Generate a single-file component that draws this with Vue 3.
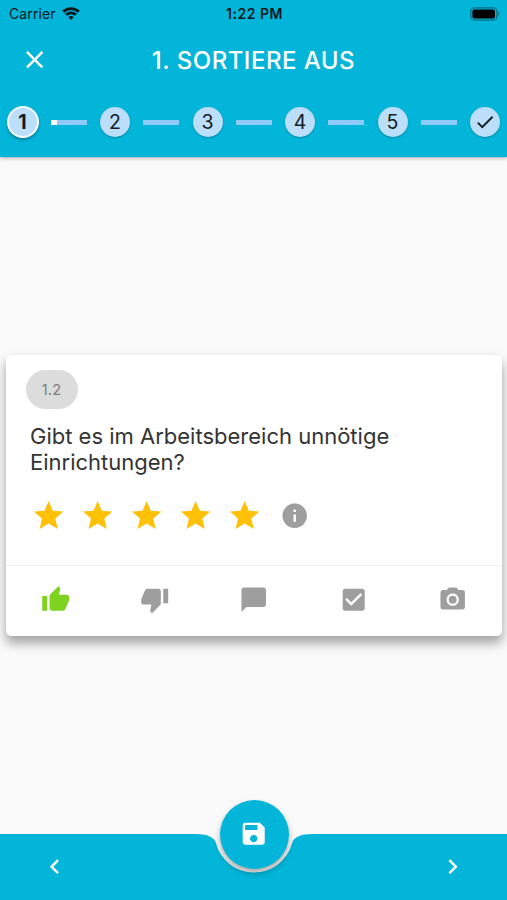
<template>
  <div class="page">
    <header class="app-header">
      <div class="status-bar">
        <div class="status-left">
          <span class="carrier">Carrier</span>
          <svg class="wifi" viewBox="0 0 18 13">
            <path d="M9 13L6.3 10.2a3.9 3.9 0 0 1 5.4 0z" />
            <path class="wave" d="M4.1 7.8a7 7 0 0 1 9.8 0M1.2 4.8a11.1 11.1 0 0 1 15.6 0" />
          </svg>
        </div>
        <span class="time">1:22 PM</span>
        <div class="status-right">
          <svg class="battery" viewBox="0 0 30 14">
            <rect class="shell" x="0.8" y="0.8" width="26" height="12.4" rx="3.6" />
            <rect x="2.4" y="2.6" width="22.6" height="8.8" rx="2" />
            <path class="cap" d="M28 4.8c1.8.7 1.8 3.7 0 4.4z" />
          </svg>
        </div>
      </div>

      <div class="title-bar">
        <button type="button" class="icon-btn">
          <svg class="icon" viewBox="0 0 24 24"><path :d="icons.close" /></svg>
        </button>
        <h1 class="title">1. SORTIERE AUS</h1>
      </div>

      <div class="stepper">
        <template v-for="step in steps" :key="step">
          <div class="step" :class="{ active: step === current }">{{ step }}</div>
          <div class="track">
            <div v-if="step === current" class="track-fill" :style="{ width: progress + '%' }"></div>
          </div>
        </template>
        <div class="step">
          <svg class="step-check" viewBox="0 0 24 24"><path :d="icons.check" /></svg>
        </div>
      </div>
    </header>

    <main class="content">
      <section class="card">
        <div class="card-body">
          <span class="chip">1.2</span>
          <p class="question">Gibt es im Arbeitsbereich unnötige Einrichtungen?</p>
          <div class="rating">
            <button v-for="n in 5" :key="n" type="button" class="star" @click="rating = n">
              <svg :class="{ filled: n <= rating }" viewBox="0 0 24 24"><path :d="icons.star" /></svg>
            </button>
            <svg class="icon info" viewBox="0 0 24 24"><path :d="icons.info" /></svg>
          </div>
        </div>
        <div class="card-actions">
          <button
            v-for="a in actions"
            :key="a"
            type="button"
            class="action"
            :class="{ selected: a === selected }"
            @click="selected = a"
          >
            <svg class="icon" viewBox="0 0 24 24"><path :d="icons[a]" /></svg>
          </button>
        </div>
      </section>
    </main>

    <footer class="bottom-bar">
      <!-- bar background with the notch for the save button -->
      <svg class="bar-shape" viewBox="0 0 507 67">
        <path d="M0 .9H195.3Q213.7.9 216.1 10.4A39.2 39.2 0 0 0 291.9 10.4Q294.3.9 312.7.9H507V67H0z" />
      </svg>
      <button type="button" class="nav-btn">
        <svg class="icon" viewBox="0 0 24 24"><path :d="icons.left" /></svg>
      </button>
      <button type="button" class="nav-btn">
        <svg class="icon" viewBox="0 0 24 24"><path :d="icons.right" /></svg>
      </button>
      <button type="button" class="fab">
        <svg class="icon" viewBox="0 0 24 24"><path :d="icons.save" /></svg>
      </button>
    </footer>
  </div>
</template>

<script setup>
import { ref } from 'vue'

const steps = [1, 2, 3, 4, 5]
const current = ref(1)
const progress = ref(18)
const rating = ref(5)

const actions = ['thumbUp', 'thumbDown', 'comment', 'checkbox', 'camera']
const selected = ref('thumbUp')

const icons = {
  close: 'M19 6.41L17.59 5 12 10.59 6.41 5 5 6.41 10.59 12 5 17.59 6.41 19 12 13.41 17.59 19 19 17.59 13.41 12z',
  check: 'M9 16.17L4.83 12l-1.42 1.41L9 19 21 7l-1.41-1.41z',
  star: 'M12 17.27L18.18 21l-1.64-7.03L22 9.24l-7.19-.61L12 2 9.19 8.63 2 9.24l5.46 4.73L5.82 21z',
  info: 'M12 2C6.48 2 2 6.48 2 12s4.48 10 10 10 10-4.48 10-10S17.52 2 12 2zm1 15h-2v-6h2v6zm0-8h-2V7h2v2z',
  thumbUp: 'M1 21h4V9H1v12zm22-11c0-1.1-.9-2-2-2h-6.31l.95-4.57.03-.32c0-.41-.17-.79-.44-1.06L14.17 1 7.59 7.59C7.22 7.95 7 8.45 7 9v10c0 1.1.9 2 2 2h9c.83 0 1.54-.5 1.84-1.22l3.02-7.05c.09-.23.14-.47.14-.73v-2z',
  thumbDown: 'M15 3H6c-.83 0-1.54.5-1.84 1.22l-3.02 7.05c-.09.23-.14.47-.14.73v2c0 1.1.9 2 2 2h6.31l-.95 4.57-.03.32c0 .41.17.79.44 1.06L9.83 23l6.59-6.59c.36-.36.58-.86.58-1.41V5c0-1.1-.9-2-2-2zm4 0v12h4V3h-4z',
  comment: 'M20 2H4c-1.1 0-2 .9-2 2v18l4-4h14c1.1 0 2-.9 2-2V4c0-1.1-.9-2-2-2z',
  checkbox: 'M19 3H5c-1.11 0-2 .9-2 2v14c0 1.1.89 2 2 2h14c1.11 0 2-.9 2-2V5c0-1.1-.89-2-2-2zm-9 14l-5-5 1.41-1.41L10 14.17l7.59-7.59L19 8l-9 9z',
  camera: 'M12 8.8a3.2 3.2 0 1 0 0 6.4 3.2 3.2 0 0 0 0-6.4zM9 2L7.17 4H4c-1.1 0-2 .9-2 2v12c0 1.1.9 2 2 2h16c1.1 0 2-.9 2-2V6c0-1.1-.9-2-2-2h-3.17L15 2H9zm3 15c-2.76 0-5-2.24-5-5s2.24-5 5-5 5 2.24 5 5-2.24 5-5 5z',
  left: 'M15.41 7.41L14 6l-6 6 6 6 1.41-1.41L10.83 12z',
  right: 'M10 6L8.59 7.41 13.17 12l-4.58 4.59L10 18l6-6z',
  save: 'M17 3H5c-1.11 0-2 .9-2 2v14c0 1.1.89 2 2 2h14c1.1 0 2-.9 2-2V7l-4-4zm-5 16c-1.66 0-3-1.34-3-3s1.34-3 3-3 3 1.34 3 3-1.34 3-3 3zm3-10H5V5h10v4z',
}
</script>

<style>
body {
  margin: 0;
}
</style>

<style scoped>
.page {
  display: flex;
  flex-direction: column;
  height: 100vh;
  background: #fafafa;
  font-family: Inter, Roboto, sans-serif;
  overflow: hidden;
}

button {
  padding: 0;
  border: none;
  background: none;
  cursor: pointer;
}

svg {
  display: block;
  fill: currentColor;
}

.icon {
  width: 29.4px;
  height: 29.4px;
}

.app-header {
  height: 157px;
  flex-shrink: 0;
  background: #03b5d9;
  box-shadow: 0 1px 4px rgba(0, 0, 0, 0.35);
}

.status-bar {
  display: grid;
  grid-template-columns: 1fr auto 1fr;
  align-items: center;
  height: 27px;
  padding: 0 7px 0 9px;
  color: #06181d;
  font-size: 14px;
}

.status-left {
  display: flex;
  align-items: center;
  gap: 6px;
}

.carrier {
  letter-spacing: 0.1px;
}

.wifi {
  width: 18px;
  height: 13px;
}

.wave {
  fill: none;
  stroke: currentColor;
  stroke-width: 2.8;
}

.time {
  font-weight: 600;
  letter-spacing: 0.5px;
}

.status-right {
  display: flex;
  justify-content: flex-end;
}

.battery {
  width: 30px;
  height: 14px;
  color: #000;
}

.shell {
  fill: none;
  stroke: #000;
  stroke-width: 1.2;
  opacity: 0.4;
}

.cap {
  opacity: 0.4;
}

.title-bar {
  display: grid;
  grid-template-columns: 70px 1fr 70px;
  align-items: center;
  height: 66px;
  color: #fff;
}

.icon-btn {
  display: flex;
  justify-content: center;
  color: #fff;
}

.title {
  margin: 0;
  text-align: center;
  font-size: 24px;
  font-weight: 500;
  letter-spacing: 0.5px;
}

.stepper {
  display: flex;
  align-items: center;
  justify-content: space-between;
  height: 58px;
  padding: 0 7px 0 7.5px;
}

.step {
  display: flex;
  align-items: center;
  justify-content: center;
  width: 30px;
  height: 30px;
  border-radius: 50%;
  background: #bbdefb;
  box-shadow: 0 1px 2px rgba(0, 0, 0, 0.25);
  color: #15191c;
  font-size: 19.5px;
}

.step.active {
  box-shadow: inset 0 0 0 1px #fff, 0 0 0 1px #fff, 0 2px 3px 1px rgba(0, 0, 0, 0.3);
  font-weight: 700;
}

.step-check {
  width: 22px;
  height: 22px;
}

.track {
  width: 36px;
  height: 5px;
  background: #90caf9;
}

.track-fill {
  height: 100%;
  background: #fff;
}

.content {
  flex: 1;
  padding: 198px 5px 0 6px;
}

.card {
  height: 281px;
  border-radius: 5px;
  background: #fff;
  box-shadow: 0 8px 11px rgba(0, 0, 0, 0.25), 0 4px 12px rgba(0, 0, 0, 0.14);
}

.card-body {
  box-sizing: border-box;
  height: 211px;
  padding: 15px 24px 0;
  border-bottom: 1px solid #f0f0f0;
}

.chip {
  display: flex;
  align-items: center;
  justify-content: center;
  width: 52px;
  height: 39px;
  margin-left: -4.5px;
  border-radius: 19.5px;
  background: #dcdcdc;
  color: #7d7d7d;
  font-size: 14.5px;
  letter-spacing: 0.2px;
}

.question {
  margin: 14px 0 0;
  color: #333;
  font-size: 22px;
  line-height: 26px;
}

.rating {
  display: flex;
  align-items: center;
  height: 36px;
  margin-top: 22.5px;
}

.star {
  display: flex;
  justify-content: center;
  width: 49px;
  color: #bdbdbd;
}

.star:first-child {
  margin-left: -6px;
}

.star svg {
  width: 35.3px;
  height: 35.3px;
}

.star .filled {
  color: #ffc107;
}

.info {
  margin-left: 10.5px;
  margin-top: 1px;
  color: #9e9e9e;
}

.card-actions {
  display: grid;
  grid-template-columns: repeat(5, 1fr);
  height: 70px;
}

.action {
  display: flex;
  align-items: center;
  justify-content: center;
  padding-bottom: 2px;
  color: #9e9e9e;
}

.action.selected {
  color: #7ed321;
}

.bottom-bar {
  position: relative;
  display: flex;
  align-items: center;
  justify-content: space-between;
  height: 67px;
  flex-shrink: 0;
  padding: 0 39.5px 0 40px;
}

.bar-shape {
  position: absolute;
  inset: 0;
  width: 100%;
  height: 100%;
  color: #03b5d9;
}

.nav-btn {
  position: relative;
  color: #fff;
}

/* floats half above the bar, centred in the notch */
.fab {
  position: absolute;
  left: 50%;
  top: -33.5px;
  display: flex;
  align-items: center;
  justify-content: center;
  width: 69px;
  height: 69px;
  margin-left: -34px;
  border-radius: 50%;
  background: #03b5d9;
  color: #fff;
  box-shadow: 0 4px 6px rgba(0, 0, 0, 0.32);
}
</style>
